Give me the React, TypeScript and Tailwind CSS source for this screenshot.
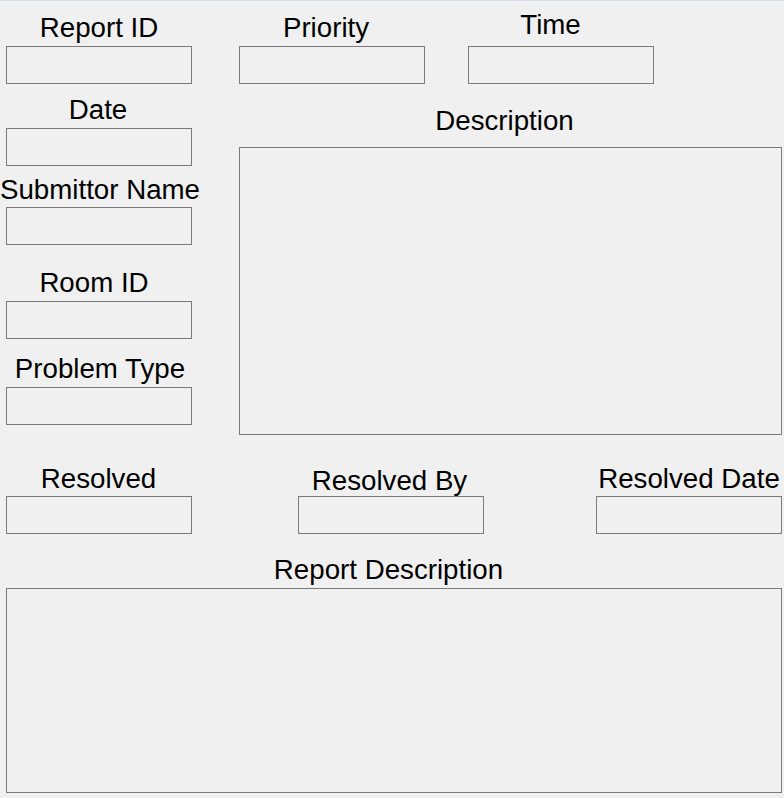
import React from 'react';

const boxCls = 'h-[38px] w-[186px] border border-[#7a7a7a] bg-[#f0f0f0]';
const labelCls = 'flex h-[27px] justify-center whitespace-nowrap text-[27.7px] leading-[27px] text-black';

const App: React.FC = () => {
  return (
    <div className="h-[798px] w-[784px] overflow-hidden bg-[#f0f0f0]" style={{ fontFamily: '"Liberation Sans", Arial, sans-serif' }}>
      <div className="h-px bg-[#cfdded]" />
      <div className="pl-[6px]">
        {/* top area */}
        <div className="flex items-start">
          <div className="flex w-[186px] flex-col">
            <div className={`${labelCls} mt-[13px]`}>Report ID</div>
            <div className={`${boxCls} mt-[5px]`} />
            <div className={`${labelCls} mt-[12px] pr-[2px]`}>Date</div>
            <div className={`${boxCls} mt-[5px]`} />
            <div className={`${labelCls} mt-[10px] pl-[2px]`}>Submittor Name</div>
            <div className={`${boxCls} mt-[4px]`} />
            <div className={`${labelCls} mt-[24px] pr-[10px]`}>Room ID</div>
            <div className={`${boxCls} mt-[5px]`} />
            <div className={`${labelCls} mt-[16px] pl-[2px]`}>Problem Type</div>
            <div className={`${boxCls} mt-[5px]`} />
          </div>

          <div className="ml-[47px] flex w-[543px] flex-col">
            <div className="flex items-start gap-[43px]">
              <div className="flex w-[186px] flex-col">
                <div className={`${labelCls} mt-[13px] pr-[12px]`}>Priority</div>
                <div className={`${boxCls} mt-[5px]`} />
              </div>
              <div className="flex w-[186px] flex-col">
                <div className={`${labelCls} mt-[10px] pr-[21px]`}>Time</div>
                <div className={`${boxCls} mt-[8px]`} />
              </div>
            </div>
            <div className={`${labelCls} mt-[23px] pr-[12px]`}>Description</div>
            <div className="mt-[13px] h-[288px] w-[543px] border border-[#7a7a7a] bg-[#f0f0f0]" />
          </div>
        </div>

        {/* resolved row */}
        <div className="flex items-start">
          <div className="flex w-[186px] flex-col">
            <div className={`${labelCls} mt-[30px] pr-[1px]`}>Resolved</div>
            <div className={`${boxCls} mt-[4px]`} />
          </div>
          <div className="ml-[106px] flex w-[186px] flex-col">
            <div className={`${labelCls} mt-[32px] pr-[3px]`}>Resolved By</div>
            <div className={`${boxCls} mt-[2px]`} />
          </div>
          <div className="ml-[112px] flex w-[186px] flex-col">
            <div className={`${labelCls} mt-[30px]`}>Resolved Date</div>
            <div className={`${boxCls} mt-[4px]`} />
          </div>
        </div>

        {/* report description */}
        <div className="flex w-[776px] flex-col">
          <div className={`${labelCls} mt-[22px] pr-[11px]`}>Report Description</div>
          <div className="mt-[5px] h-[205px] w-[776px] border border-[#7a7a7a] bg-[#f0f0f0]" />
        </div>
      </div>
    </div>
  );
};

export default App;
